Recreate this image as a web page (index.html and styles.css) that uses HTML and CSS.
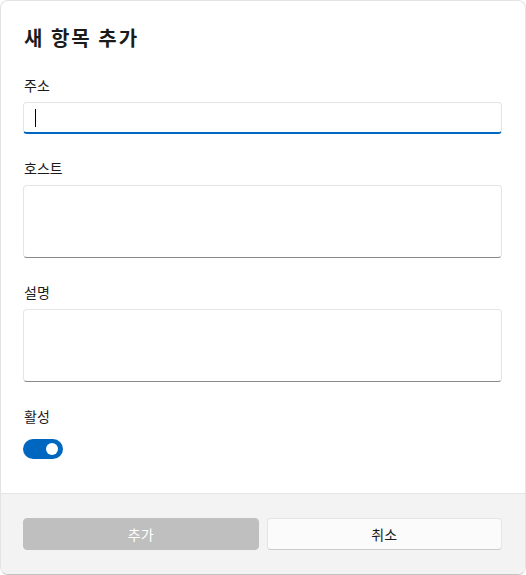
FILE: index.html
```html
<!DOCTYPE html>
<html>
<head>
    <title>새 항목 추가</title>
    <link rel="stylesheet" href="styles.css">
</head>
<body>
    <div class="dialog">
        <div class="content">
            <h1 class="title">새 항목 추가</h1>
            <div class="field">
                <label class="label">주소</label>
                <div class="input focused"><span class="caret"></span></div>
            </div>
            <div class="field">
                <label class="label">호스트</label>
                <div class="input multi"></div>
            </div>
            <div class="field">
                <label class="label">설명</label>
                <div class="input multi"></div>
            </div>
            <div class="field last">
                <label class="label">활성</label>
                <div class="toggle-row">
                    <div class="toggle on"><span class="knob"></span></div>
                </div>
            </div>
        </div>
        <div class="footer">
            <button class="btn disabled">추가</button>
            <button class="btn">취소</button>
        </div>
    </div>
</body>
</html>
```

FILE: styles.css
```css
html, body {
    margin: 0;
    padding: 0;
    background: #ffffff;
}

body {
    font-family: "Noto Sans CJK KR", "Noto Sans", sans-serif;
    font-size: 14px;
    color: #1b1b1b;
}

.dialog {
    width: 526px;
    height: 575px;
    box-sizing: border-box;
    border: 1px solid #e3e3e3;
    border-bottom-color: #c4c4c4;
    border-radius: 8px;
    overflow: hidden;
    display: flex;
    flex-direction: column;
    background: #ffffff;
}

.content {
    padding: 23px 23px 27px 22px;
    flex: 1;
}

.title {
    font-size: 20px;
    line-height: 28px;
    font-weight: 700;
    letter-spacing: 2px;
    margin: 0 0 23px 1px;
}

.field {
    margin-bottom: 24px;
}

.field.last {
    margin-bottom: 0;
}

.label {
    display: block;
    line-height: 20px;
    margin: 0 0 7px 1px;
}

.input {
    height: 32px;
    box-sizing: border-box;
    background: #ffffff;
    border: 1px solid #e5e5e5;
    border-bottom: 1px solid #8a8a8a;
    border-radius: 4px;
    display: flex;
    align-items: center;
    padding-left: 11px;
}

.input.multi {
    height: 73px;
}

.input.focused {
    border-bottom: 2px solid #0067c0;
}

.caret {
    width: 1px;
    height: 18px;
    background: #000000;
    margin-top: 1px;
}

.toggle-row {
    height: 32px;
    display: flex;
    align-items: center;
}

.toggle {
    width: 40px;
    height: 20px;
    border-radius: 10px;
    background: #0067c0;
    position: relative;
}

.knob {
    position: absolute;
    width: 12px;
    height: 12px;
    border-radius: 50%;
    background: #ffffff;
    top: 4px;
    right: 5px;
}

.footer {
    background: #f3f3f3;
    border-top: 1px solid #e5e5e5;
    padding: 24px 23px 24px 22px;
    display: flex;
    gap: 8px;
}

.btn {
    flex: 1;
    height: 32px;
    font-family: "Noto Sans CJK KR", "Noto Sans", sans-serif;
    font-size: 14px;
    color: #1b1b1b;
    background: #fbfbfb;
    border: 1px solid #e5e5e5;
    border-bottom-color: #cccccc;
    border-radius: 4px;
    padding: 0;
}

.btn.disabled {
    background: #bfbfbf;
    border-color: #bfbfbf;
    color: #ffffff;
}
```
